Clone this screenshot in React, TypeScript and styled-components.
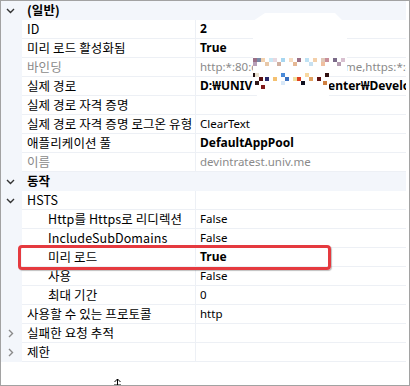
import * as React from 'react';
import styled, { createGlobalStyle } from 'styled-components';

const GlobalStyle = createGlobalStyle`
  html, body { margin: 0; padding: 0; background: #ffffff; }
  body {
    font-family: "Noto Sans CJK KR", "Noto Sans", sans-serif;
    font-size: 12px;
    color: #000;
  }
`;

const StyledFrame = styled.div`
  position: relative;
  width: 410px;
  height: 386px;
  box-sizing: border-box;
  border: 1px solid #a2a2a2;
  background: #ffffff;
  padding-right: 3px;
  overflow: hidden;
`;

const StyledGrid = styled.div`
  display: flex;
  flex-direction: column;
`;

const StyledRow = styled.div<{ $category?: boolean }>`
  display: grid;
  grid-template-columns: 21px 174px 1fr;
  height: 19px;
  background: ${p => (p.$category ? '#f3f6fb' : '#ffffff')};
`;

const StyledGutter = styled.div`
  display: flex;
  align-items: center;
  justify-content: center;
  background: #f3f6fb;
  padding-right: 2px;
`;

const StyledName = styled.div<{ $indent: number; $bold?: boolean; $dim?: boolean }>`
  display: flex;
  align-items: center;
  padding-left: ${p => 5 + p.$indent * 21}px;
  border-bottom: 1px solid ${p => (p.$bold ? 'transparent' : '#edf0f5')};
  border-right: 1px solid ${p => (p.$bold ? 'transparent' : '#edf0f5')};
  white-space: nowrap;
  overflow: hidden;
  line-height: 18px;
  font-size: 12.5px;
  letter-spacing: 0.1px;
  font-weight: ${p => (p.$bold ? 700 : 400)};
  color: ${p => (p.$dim ? '#8a8a8a' : '#000')};
`;

const StyledValue = styled.div<{ $bold?: boolean; $dim?: boolean; $category?: boolean }>`
  display: flex;
  align-items: center;
  padding-left: 4px;
  border-bottom: 1px solid ${p => (p.$category ? 'transparent' : '#edf0f5')};
  white-space: nowrap;
  overflow: hidden;
  line-height: 18px;
  font-family: "Noto Sans", "Noto Sans CJK KR", sans-serif;
  font-size: ${p => (p.$bold ? '12px' : '11.5px')};
  font-weight: ${p => (p.$bold ? 700 : 400)};
  color: ${p => (p.$dim ? '#8a8a8a' : '#000')};
`;

const StyledLeftPart = styled.span<{ $w: number }>`
  display: inline-block;
  flex: none;
  width: ${p => p.$w}px;
  overflow: hidden;
`;

const StyledHighlight = styled.div`
  position: absolute;
  left: 17px;
  top: 244px;
  width: 313px;
  height: 25px;
  box-sizing: border-box;
  border: 3px solid #e53a3f;
  border-radius: 4px;
  box-shadow: 1px 1px 1px rgba(0, 0, 0, 0.25);
  pointer-events: none;
`;

const StyledMosaic = styled.div`
  position: absolute;
  left: 252px;
  top: 12px;
  width: 94px;
  height: 86px;
  background: #ffffff;
  clip-path: polygon(12px 0, 82px 0, 94px 12px, 94px 63px, 76px 63px, 76px 86px, 6px 86px, 0 76px, 0 8px);
`;

const StyledPixel = styled.div`
  position: absolute;
  width: 4px;
  height: 4px;
`;

const StyledCursor = styled.svg`
  position: absolute;
  left: 112px;
  top: 378px;
`;

type Prop = {
  name: string;
  value?: string;
  right?: string;
  split?: number;
  indent?: number;
  category?: boolean;
  expander?: 'open' | 'closed';
  bold?: boolean;
  dim?: boolean;
};

const props: Prop[] = [
  { name: '(일반)', category: true, expander: 'open' },
  { name: 'ID', value: '2', bold: true },
  { name: '미리 로드 활성화됨', value: 'True', bold: true },
  { name: '바인딩', value: 'http:*:80:d', right: 'me,https:*:443', split: 145, dim: true },
  { name: '실제 경로', value: 'D:₩UNIV D', right: 'enter₩Develop', split: 128, bold: true },
  { name: '실제 경로 자격 증명', value: '' },
  { name: '실제 경로 자격 증명 로그온 유형', value: 'ClearText' },
  { name: '애플리케이션 풀', value: 'DefaultAppPool', bold: true },
  { name: '이름', value: 'devintratest.univ.me', dim: true },
  { name: '동작', category: true, expander: 'open' },
  { name: 'HSTS', value: '', expander: 'open' },
  { name: 'Http를 Https로 리디렉션', value: 'False', indent: 1 },
  { name: 'IncludeSubDomains', value: 'False', indent: 1 },
  { name: '미리 로드', value: 'True', indent: 1, bold: true },
  { name: '사용', value: 'False', indent: 1 },
  { name: '최대 기간', value: '0', indent: 1 },
  { name: '사용할 수 있는 프로토콜', value: 'http' },
  { name: '실패한 요청 추적', value: '', expander: 'closed' },
  { name: '제한', value: '', expander: 'closed' },
];

// blurred-out part of the binding / path values
const pixels: [number, number, string][] = [
  [0, 45, '#9a6f86'], [4, 45, '#7a8aa8'], [8, 45, '#f2d2b0'], [16, 45, '#c9e8f5'],
  [20, 45, '#e8d8e0'], [28, 45, '#a7d6f0'], [36, 45, '#f6dcc0'], [44, 45, '#9a6f86'],
  [52, 45, '#bfe2f4'], [60, 45, '#f3cfa9'], [68, 45, '#e0c8b8'], [72, 45, '#c88e9a'],
  [80, 45, '#7a6a88'], [88, 45, '#d8c0d0'],
  [0, 49, '#b8a0b8'], [12, 49, '#e8c8a8'], [24, 49, '#d0b0a0'], [40, 49, '#e6b894'],
  [56, 49, '#c7e0f0'], [68, 49, '#f0c0a0'], [84, 49, '#b49cb0'],
  [-2, 60, '#201010'], [6, 64, '#5a1010'], [2, 68, '#301818'], [12, 64, '#2a2a6a'],
  [20, 64, '#f4c070'], [28, 60, '#4a8ad8'], [32, 64, '#3a70c0'], [40, 64, '#f0e0a0'],
  [48, 68, '#101020'], [56, 64, '#e0a060'], [64, 64, '#601010'], [8, 72, '#801818'],
  [28, 68, '#d8e8f8'], [72, 60, '#301010'], [70, 68, '#d08040'], [2, 60, '#e8e0d0'],
  [44, 64, '#e04020'], [52, 60, '#f8d8a0'],
];

const Chevron = ({ open }: { open: boolean }) =>
  open ? (
    <svg width="9" height="6" viewBox="0 0 9 6">
      <polyline points="1,1 4.5,4.5 8,1" fill="none" stroke="#333" strokeWidth="1.4" />
    </svg>
  ) : (
    <svg width="6" height="9" viewBox="0 0 6 9">
      <polyline points="1,1 4.5,4.5 1,8" fill="none" stroke="#8a8a8a" strokeWidth="1.4" />
    </svg>
  );

export default function App() {
  return (
    <>
      <GlobalStyle />
      <StyledFrame>
        <StyledGrid>
          {props.map((p, i) => (
            <StyledRow key={i} $category={p.category}>
              <StyledGutter>
                {p.expander && <Chevron open={p.expander === 'open'} />}
              </StyledGutter>
              <StyledName $indent={p.indent || 0} $bold={p.category} $dim={p.dim}>
                {p.name}
              </StyledName>
              <StyledValue $bold={p.bold} $dim={p.dim} $category={p.category}>
                {p.split ? (
                  <>
                    <StyledLeftPart $w={p.split}>{p.value}</StyledLeftPart>
                    {p.right}
                  </>
                ) : (
                  p.value
                )}
              </StyledValue>
            </StyledRow>
          ))}
        </StyledGrid>
        <StyledMosaic>
          {pixels.map(([x, y, c], i) => (
            <StyledPixel key={i} style={{ left: x, top: y, background: c }} />
          ))}
        </StyledMosaic>
        <StyledHighlight />
        <StyledCursor width="9" height="8" viewBox="0 0 9 8">
          <path d="M4.5 0 L4.5 8 M1.5 3 L4.5 0 L7.5 3 M1 6 L8 6" stroke="#000" strokeWidth="1" fill="none" />
        </StyledCursor>
      </StyledFrame>
    </>
  );
}
